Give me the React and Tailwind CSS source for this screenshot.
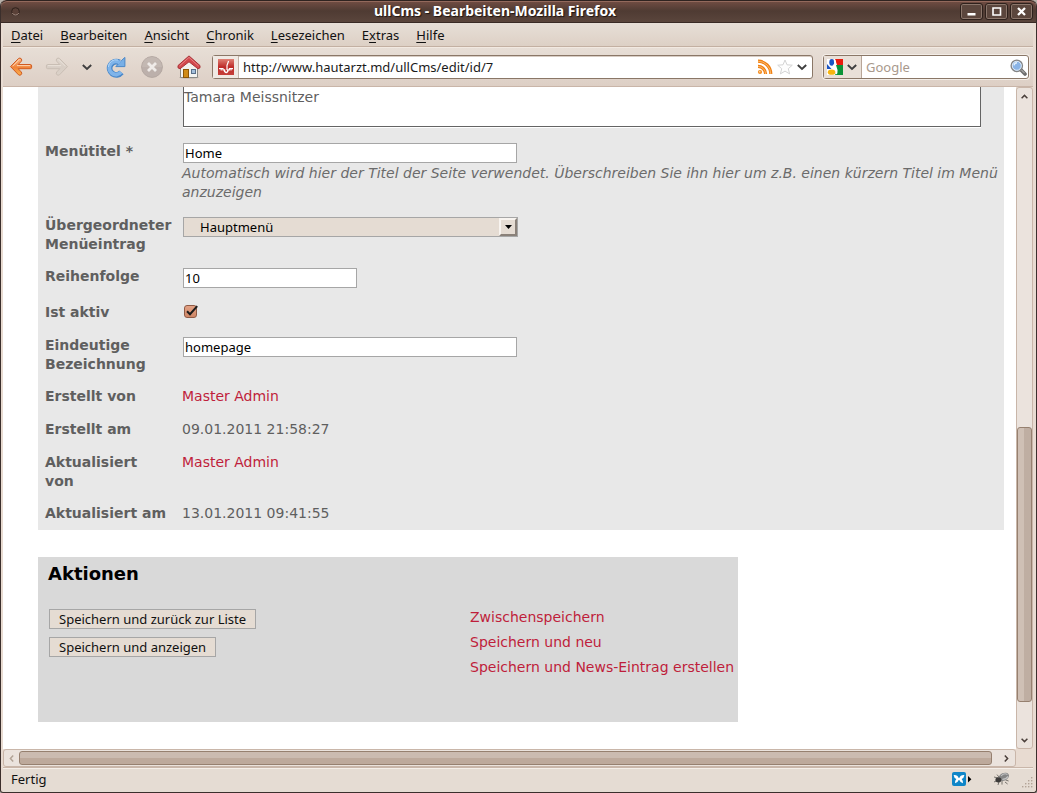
import React from "react";

const MENU = [
  ["", "D", "atei"],
  ["", "B", "earbeiten"],
  ["", "A", "nsicht"],
  ["", "C", "hronik"],
  ["", "L", "esezeichen"],
  ["E", "x", "tras"],
  ["", "H", "ilfe"],
];

function ArrowIcon({ back }) {
  const id = back ? "arrow-back" : "arrow-forward";
  return (
    <svg width="24" height="24" viewBox="0 0 24 24" className={back ? "" : "-scale-x-100"} aria-hidden="true">
      <defs>
        <linearGradient id={id} x1="0" y1="0" x2="0" y2="1">
          <stop offset="0" stopColor={back ? "#fbb98a" : "#dfd6cd"} />
          <stop offset="0.55" stopColor={back ? "#f0843a" : "#d8cec5"} />
          <stop offset="1" stopColor={back ? "#fbb04c" : "#dcd2c9"} />
        </linearGradient>
      </defs>
      <path
        d="M1.5 11.6 L9.6 3.4 Q11 2.5 12.3 3.8 Q13.3 5.2 12.2 6.4 L9.2 9.5 H21.4 Q22.6 9.6 22.6 10.8 V12.4 Q22.6 13.6 21.4 13.7 H9.2 L12.2 16.9 Q13.3 18.2 12.3 19.5 Q11 20.8 9.6 19.9 Z"
        fill={`url(#${id})`}
        stroke={back ? "#cf5a20" : "#c9beb4"}
        strokeLinejoin="round"
      />
      <path d="M3.6 11.2 L10.4 4.4 M8 10.6 H21" fill="none" stroke={back ? "#fdd3b0" : "#e8e0d8"} strokeWidth="1" />
    </svg>
  );
}

function Chevron({ className = "text-[#3f3f3f]" }) {
  return (
    <svg width="10" height="7" viewBox="0 0 10 7" className={className} aria-hidden="true">
      <path d="M0.8 1 L5 5 L9.2 1" fill="none" stroke="currentColor" strokeWidth="1.9" />
    </svg>
  );
}

function ScrollArrow({ className }) {
  return (
    <svg width="7" height="5" viewBox="0 0 7 5" className={className} aria-hidden="true">
      <path d="M0.6 0.8 L3.5 3.6 L6.4 0.8" fill="none" stroke="currentColor" strokeWidth="1.5" />
    </svg>
  );
}

function ReloadIcon() {
  return (
    <svg width="20" height="22" viewBox="0 0 20 22" aria-hidden="true">
      <path d="M13.4 6.4 A6.6 6.6 0 1 0 15.4 16.4" fill="none" stroke="#4b88c8" strokeWidth="5.8" />
      <path d="M18.9 1.4 V10.6 H9.8 L12.6 7.8 L15.6 4.4 Z" fill="#78afe6" stroke="#4b88c8" strokeLinejoin="round" />
      <path d="M14 6.8 A6.6 6.6 0 1 0 15 16.1" fill="none" stroke="#7fb4ea" strokeWidth="3.8" />
      <path d="M12 4 A7.6 7.6 0 0 0 2.4 11" fill="none" stroke="#b2d6f7" strokeWidth="1" />
    </svg>
  );
}

function StopIcon() {
  return (
    <svg width="24" height="24" viewBox="0 0 24 24" aria-hidden="true">
      <circle cx="12" cy="12" r="10.4" fill="#bcb0ab" stroke="#b3a7a1" />
      <path d="M2 12 A10 10 0 0 1 22 12 Z" fill="#c3b8b2" />
      <path d="M8 8 L16 16 M16 8 L8 16" stroke="#efebe8" strokeWidth="2.8" />
    </svg>
  );
}

function HomeIcon() {
  return (
    <svg width="24" height="24" viewBox="0 0 24 24" aria-hidden="true">
      <ellipse cx="12" cy="22.6" rx="10" ry="1" fill="#b9aea5" />
      <path d="M3.5 12 L12 5 L20.5 12 V22.5 H3.5 Z" fill="#f3f3f0" stroke="#8a8a86" />
      <path d="M1 12.8 V10.6 L12 0.9 L23 10.6 V12.8 L21 13.8 L12 6.8 L3 13.8 Z" fill="#d2484d" stroke="#a83237" strokeLinejoin="round" />
      <path d="M2.4 11 L12 2.4 L21.6 11" fill="none" stroke="#e88285" />
      <rect x="6.5" y="14.5" width="5" height="8" fill="#d08b17" stroke="#8c5606" />
      <rect x="14.5" y="14.5" width="4" height="4" fill="#a4c0dc" stroke="#59708a" />
    </svg>
  );
}

function SiteIcon() {
  return (
    <svg width="16" height="16" viewBox="0 0 16 16" aria-hidden="true">
      <defs>
        <linearGradient id="site" x1="0" y1="0" x2="0" y2="1">
          <stop offset="0" stopColor="#e08175" />
          <stop offset="0.5" stopColor="#bd2b29" />
          <stop offset="1" stopColor="#c5403a" />
        </linearGradient>
      </defs>
      <rect width="16" height="16" fill="url(#site)" />
      <path d="M10.6 2 L9 6.4 V11" fill="none" stroke="#fff" strokeWidth="1.2" />
      <path d="M6.4 10.4 L6.6 12.4 Q8 14.6 9.6 12.6 L10 10.4" fill="none" stroke="#fff" strokeWidth="1.5" />
      <path d="M1 9.6 H5 V11 H6.6 M10 11 H11.4 V9.6 H15 M3.2 9.4 V11.4 M13 9.4 V11.4" fill="none" stroke="#fff" strokeWidth="1.1" />
    </svg>
  );
}

function FeedIcon() {
  return (
    <svg width="16" height="16" viewBox="0 0 16 16" aria-hidden="true">
      <circle cx="3" cy="13" r="2.1" fill="#f58c1e" />
      <circle cx="2.8" cy="12.8" r="0.8" fill="#ffe0b8" />
      <path d="M1 7.4 A7.6 7.6 0 0 1 8.6 15 M1 2.2 A12.8 12.8 0 0 1 13.8 15" fill="none" stroke="#ef7f12" strokeWidth="3.2" />
      <path d="M1 7.4 A7.6 7.6 0 0 1 8.6 15 M1 2.2 A12.8 12.8 0 0 1 13.8 15" fill="none" stroke="#fcb86a" strokeWidth="1" />
    </svg>
  );
}

function StarIcon() {
  return (
    <svg width="16" height="16" viewBox="0 0 16 16" aria-hidden="true">
      <path
        d="M8 1 L10 5.8 L15.3 6.2 L11.3 9.7 L12.6 14.9 L8 12.1 L3.4 14.9 L4.7 9.7 L0.7 6.2 L6 5.8 Z"
        fill="#fdfdfd"
        stroke="#d3d3d3"
        strokeLinejoin="round"
      />
    </svg>
  );
}

function GoogleIcon() {
  return (
    <svg width="16" height="16" viewBox="0 0 16 16" aria-hidden="true">
      <rect width="16" height="16" fill="#fff" />
      <path d="M8 0 H16 V6 H10 Z" fill="#ea1c0d" />
      <path d="M9 6 H16 V16 H8 L10.5 11 Z" fill="#0a9438" />
      <path d="M0 5 L4.5 10 H0 Z" fill="#1b55c4" />
      <ellipse cx="4.8" cy="3.4" rx="2.5" ry="3.3" fill="#1b55c4" />
      <ellipse cx="4.6" cy="13.2" rx="3.8" ry="2.6" fill="#f6b50f" />
      <path d="M7.4 1 Q9.2 4 7 6.4 Q5.6 8 8 9.4 Q10.6 11.4 9.2 15" fill="none" stroke="#fff" strokeWidth="1.7" />
    </svg>
  );
}

function MagnifierIcon() {
  return (
    <svg width="17" height="17" viewBox="0 0 17 17" aria-hidden="true">
      <path d="M10.6 10.6 L15 15" stroke="#6c6c6c" strokeWidth="3.6" strokeLinecap="round" />
      <path d="M11.4 11 L14.6 14.2" stroke="#a5a5a5" strokeWidth="1.2" />
      <circle cx="6.8" cy="6.8" r="5.6" fill="#9fc3ec" stroke="#858585" strokeWidth="1.5" />
      <circle cx="6.8" cy="6.8" r="4.5" fill="#8ab4e6" stroke="#e8f0f8" strokeWidth="0.9" />
      <path d="M4 6.4 Q4.4 4 7 3.8" fill="none" stroke="#e3f0fd" strokeWidth="1.4" />
    </svg>
  );
}

function WindowButton({ label, children }) {
  return (
    <button
      type="button"
      aria-label={label}
      className="flex h-[17px] w-[23px] items-center justify-center rounded-[3px] border border-[#2e211c] bg-[#5b463d] text-white shadow-[inset_0_0_0_1px_#8b766b]"
    >
      <svg width="11" height="11" viewBox="0 0 11 11" aria-hidden="true">
        {children}
      </svg>
    </button>
  );
}

function TitleBar() {
  return (
    <header className="flex h-[23px] shrink-0 items-center rounded-t-md border-b border-[#392a25] bg-linear-to-b from-[#754f45] via-[#4f3b33] to-[#5a453c] pr-[3px] pl-[10px] shadow-[inset_0_1px_0_#2f2320,inset_0_2px_0_#93695c]">
      <svg width="9" height="9" viewBox="0 0 9 9" aria-hidden="true">
        <circle cx="4.5" cy="4.5" r="3.8" fill="#5a4138" stroke="#2f211c" />
        <path d="M1.3 6 A3.6 3.6 0 0 0 7.8 6" fill="none" stroke="#a58d82" />
      </svg>
      <h1 className="flex-1 pl-[10px] text-center text-[14px] leading-5 font-bold text-white [text-shadow:1px_1px_1px_#1d1310]">
        ullCms - Bearbeiten-Mozilla Firefox
      </h1>
      <div className="flex gap-0.5">
        <WindowButton label="Minimieren">
          <rect x="1.5" y="7" width="8" height="2.5" fill="#fff" />
        </WindowButton>
        <WindowButton label="Maximieren">
          <path d="M2 2 H9.5 V9 H2 Z" fill="none" stroke="#fff" strokeWidth="1.6" />
        </WindowButton>
        <WindowButton label="Schließen">
          <path d="M2 2 L9 9 M9 2 L2 9" stroke="#fff" strokeWidth="2.3" />
        </WindowButton>
      </div>
    </header>
  );
}

function MenuBar() {
  return (
    <nav className="flex h-6 shrink-0 items-center gap-[17px] border-b border-[#c3b0a2] bg-linear-to-b from-[#e7dfd7] to-[#ddd0c5] px-2">
      {MENU.map(([before, key, after]) => (
        <button key={key} type="button" className="text-[13px] leading-5 text-[#111]">
          {before}
          <span className="underline underline-offset-2">{key}</span>
          {after}
        </button>
      ))}
    </nav>
  );
}

function Toolbar() {
  return (
    <div className="flex h-[40px] shrink-0 items-center border-t border-b border-t-[#f2e9e1] border-b-[#c9b5a8] bg-linear-to-b from-[#e7ded6] to-[#ddcfc5] pr-1 pl-1.5">
      <div className="flex items-center">
        <button type="button" aria-label="Zurück"><ArrowIcon back /></button>
        <button type="button" aria-label="Vor" className="ml-3"><ArrowIcon /></button>
        <button type="button" aria-label="Verlauf" className="ml-[13px]"><Chevron /></button>
        <button type="button" aria-label="Neu laden" className="ml-[14px]"><ReloadIcon /></button>
        <button type="button" aria-label="Stopp" className="ml-[14px]"><StopIcon /></button>
        <button type="button" aria-label="Startseite" className="ml-[13px]"><HomeIcon /></button>
      </div>
      <div className="ml-[11px] flex h-6 min-w-0 flex-1 items-center rounded-[3px] border border-[#8a7767] bg-white shadow-[inset_0_1px_0_#d8cdc4]">
        <span className="flex h-full w-[26px] shrink-0 items-center justify-center border-r border-[#c2b3a7] bg-[#f0e9e3]">
          <SiteIcon />
        </span>
        <input
          aria-label="Adresse"
          defaultValue="http://www.hautarzt.md/ullCms/edit/id/7"
          className="h-full min-w-0 flex-1 bg-transparent px-1 text-[13px] text-[#1a1a1a] outline-none"
        />
        <span className="flex items-center gap-1 pr-[5px]">
          <FeedIcon />
          <StarIcon />
          <button type="button" aria-label="Adressliste"><Chevron /></button>
        </span>
      </div>
      <div className="ml-[10px] flex h-6 w-[206px] items-center rounded-[3px] border border-[#8a7767] bg-white shadow-[0_0_0_1px_#f3ede7]">
        <button type="button" aria-label="Suchmaschine" className="flex h-full items-center gap-1 border-r border-[#b8a698] bg-[#e9e0d8] pr-1 pl-[3px]">
          <GoogleIcon />
          <Chevron />
        </button>
        <input
          aria-label="Suche"
          placeholder="Google"
          className="h-full min-w-0 flex-1 bg-transparent px-1 text-[13px] outline-none placeholder:text-[#a8998c]"
        />
        <button type="button" aria-label="Suchen" className="pr-px"><MagnifierIcon /></button>
      </div>
    </div>
  );
}

function Row({ label, id, className = "min-h-[33px]", children }) {
  const Tag = id ? "label" : "span";
  return (
    <div className={`flex pt-[7px] pb-[6px] pl-[7px] ${className}`}>
      <div className="w-[137px] shrink-0 pr-[12px] font-bold">
        <Tag htmlFor={id}>{label}</Tag>
      </div>
      <div className="min-w-0 flex-1">{children}</div>
    </div>
  );
}

const FIELD = "ml-px block h-5 border border-[#a6a6a6] bg-white px-px font-['Noto_Sans',sans-serif] text-[13px] text-black outline-none";
const LINK = "text-[#bf1e3b]";

function PageForm() {
  return (
    <section className="mr-[12px] ml-[35px] bg-[#e8e8e8] text-[14px] leading-[19px] text-[#5f5f5f]">
      <div className="mb-2 pr-[23px] pl-[145px]">
        <textarea
          aria-label="Inhalt"
          defaultValue="Tamara Meissnitzer"
          className="block h-[40px] w-full resize-none overflow-hidden border-x border-b border-[#646464] bg-white pt-px shadow-[0_1px_0_#fff] outline-none"
        />
      </div>
      <Row label="Menütitel *" id="title" className="min-h-[74px]">
        <input id="title" defaultValue="Home" className={`${FIELD} mt-px w-[334px]`} />
        <p className="-mb-px pt-px text-[#6b6b6b] italic">
          Automatisch wird hier der Titel der Seite verwendet. Überschreiben Sie ihn hier um z.B. einen kürzern Titel im Menü anzuzeigen
        </p>
      </Row>
      <Row label="Übergeordneter Menüeintrag" id="parent">
        <div className="relative mt-px ml-px w-[335px]">
          <select
            id="parent"
            className="block h-5 w-full appearance-none border border-[#a6a6a6] bg-[#e5dcd3] pl-4 font-['Noto_Sans',sans-serif] text-[13px] text-black"
          >
            <option>Hauptmenü</option>
          </select>
          <span className="pointer-events-none absolute top-px right-px bottom-px flex w-[18px] items-center justify-center border-2 border-t-[#f8f4f0] border-r-[#8a8179] border-b-[#8a8179] border-l-[#f8f4f0] bg-[#e5dcd3]">
            <svg width="7" height="4" viewBox="0 0 7 4" aria-hidden="true">
              <path d="M0 0 H7 L3.5 4 Z" fill="#000" />
            </svg>
          </span>
        </div>
      </Row>
      <Row label="Reihenfolge" id="order" className="min-h-[36px]">
        <input id="order" defaultValue="10" className={`${FIELD} mt-px w-[174px]`} />
      </Row>
      <Row label="Ist aktiv" id="active">
        <div className="relative mt-0.5 ml-0.5 h-[13px] w-[14px]">
          <input
            id="active"
            type="checkbox"
            defaultChecked
            className="block size-[13px] appearance-none rounded-[3px] border border-[#8f5a45] bg-linear-to-b from-[#e3a285] to-[#cf8767]"
          />
          <svg width="14" height="13" viewBox="0 0 14 13" className="pointer-events-none absolute inset-0" aria-hidden="true">
            <path d="M3 6.2 L6 9.2 L13.2 1.2" fill="none" stroke="#1c1c1c" strokeWidth="2" />
          </svg>
        </div>
      </Row>
      <Row label="Eindeutige Bezeichnung" id="slug">
        <input id="slug" defaultValue="homepage" className={`${FIELD} mt-px w-[334px]`} />
      </Row>
      <Row label="Erstellt von"><a href="#creator" className={LINK}>Master Admin</a></Row>
      <Row label="Erstellt am">09.01.2011 21:58:27</Row>
      <Row label="Aktualisiert von"><a href="#editor" className={LINK}>Master Admin</a></Row>
      <Row label="Aktualisiert am">13.01.2011 09:41:55</Row>
    </section>
  );
}

function Actions() {
  const button = "h-5 border border-[#a6a6a6] bg-[#e5dcd3] px-[9px] font-['Noto_Sans',sans-serif] text-[13px] leading-[18px] text-[#111]";
  return (
    <section className="mt-[27px] ml-[35px] min-h-[165px] w-[700px] max-w-full bg-[#d9d9d9] pt-[5px] pl-[10px]">
      <h2 className="text-[18px] leading-6 font-bold text-black">Aktionen</h2>
      <div className="mt-[19px] flex">
        <div className="flex w-[422px] shrink-0 flex-col items-start gap-2 pt-1 pl-px">
          <button type="button" className={button}>Speichern und zurück zur Liste</button>
          <button type="button" className={button}>Speichern und anzeigen</button>
        </div>
        <div className="flex flex-col text-[14px] leading-[25px] whitespace-nowrap">
          <a href="#keep" className={LINK}>Zwischenspeichern</a>
          <a href="#new" className={LINK}>Speichern und neu</a>
          <a href="#news" className={LINK}>Speichern und News-Eintrag erstellen</a>
        </div>
      </div>
    </section>
  );
}

function VerticalScroll() {
  return (
    <div className="flex w-[17px] shrink-0 flex-col items-center rounded-[3px] border border-[#c9b6a9] bg-[#ebe3dd] text-[#4a3f3a]">
      <span className="flex h-4 items-center"><ScrollArrow className="rotate-180" /></span>
      <div className="flex w-full flex-1 flex-col">
        <div className="flex-[324]" />
        <div className="w-full flex-[274] rounded-[3px] border border-[#96806f] bg-linear-to-r from-[#cfc0b5] from-50% to-[#bfaea2] to-50%" />
        <div className="flex-[30]" />
      </div>
      <span className="flex h-4 items-center"><ScrollArrow /></span>
    </div>
  );
}

function HorizontalScroll() {
  return (
    <div className="flex h-[18px] shrink-0">
      <div className="flex min-w-0 flex-1 items-center rounded-[3px] border border-[#c9b6a9] bg-[#ebe3dd] text-[#4a3f3a]">
        <span className="flex w-[15px] justify-center text-[#b3a497]"><ScrollArrow className="rotate-90" /></span>
        <div className="h-[14px] flex-1 rounded-[3px] border border-[#96806f] bg-linear-to-b from-[#cbbbb0] from-50% to-[#bda99b] to-50%" />
        <span className="flex w-[23px] justify-end pr-[5px]"><ScrollArrow className="-rotate-90" /></span>
      </div>
      <div className="w-[17px] shrink-0" />
    </div>
  );
}

function StatusBar() {
  return (
    <footer className="flex h-[25px] shrink-0 items-center border-t border-[#c9b6a9] bg-[#e5dcd3] pb-[3px] pl-2 text-[13px] leading-5 text-[#111] shadow-[inset_0_1px_0_#f5efe9]">
      <span className="flex-1">Fertig</span>
      <svg width="20" height="14" viewBox="0 0 20 14" aria-hidden="true">
        <rect width="14" height="14" rx="2" fill="#0f86c8" />
        <path d="M1.6 3 Q5.6 2.6 6.7 6 H7.3 Q8.4 2.6 12.4 3 Q12 6.2 9.6 7 Q11.2 8.2 11 11.2 Q8.4 11 7.3 8 H6.7 Q5.6 11 3 11.2 Q2.8 8.2 4.4 7 Q2 6.2 1.6 3 Z" fill="#fff" />
        <path d="M16 4 L19.4 7.2 L16 10.4 Z" fill="#000" />
      </svg>
      <svg width="17" height="14" viewBox="0 0 17 14" aria-hidden="true" className="ml-[21px]">
        <path d="M1 5 L5 6 M1 10 L4 8.6 M5 13 L6 9.6 M9 12.6 L9 9 M12 10 L14.6 12 M4 2.6 L6 5 M12.6 8 L15.6 9" stroke="#6a6661" strokeWidth="0.9" />
        <ellipse cx="10.8" cy="4.8" rx="5.4" ry="3.8" transform="rotate(-25 10.8 4.8)" fill="#858585" />
        <ellipse cx="5.4" cy="7.8" rx="3" ry="2.6" fill="#3c3a39" />
        <path d="M8 4 Q11 0.6 14.4 2.4 M9.4 7.4 Q13 7.4 15 4.4" fill="none" stroke="#c4c4c4" strokeWidth="1.1" />
      </svg>
      <svg width="12" height="12" viewBox="0 0 12 12" aria-hidden="true" className="ml-[11px] self-end">
        {[[10, 0], [7, 3], [10, 3], [4, 6], [7, 6], [10, 6], [1, 9], [4, 9], [7, 9], [10, 9]].map(([x, y]) => (
          <rect key={`${x}-${y}`} x={x} y={y} width="1.4" height="1.4" fill="#b3a497" />
        ))}
      </svg>
    </footer>
  );
}

export default function App() {
  return (
    <div className="h-screen bg-[#b9b2ab] font-['Noto_Sans',sans-serif]">
      <div className="flex h-full flex-col overflow-hidden rounded-t-md rounded-b-[3px] border-r border-b border-l border-[#3b2f2c] bg-[#e8dbd1]">
        <TitleBar />
        <div className="flex min-h-0 flex-1 flex-col pr-[3px] pl-0.5">
          <MenuBar />
          <Toolbar />
          <div className="flex min-h-0 flex-1">
            <main className="min-w-0 flex-1 overflow-hidden bg-white font-['DejaVu_Sans',sans-serif]">
              <PageForm />
              <Actions />
            </main>
            <VerticalScroll />
          </div>
          <HorizontalScroll />
          <StatusBar />
        </div>
      </div>
    </div>
  );
}
